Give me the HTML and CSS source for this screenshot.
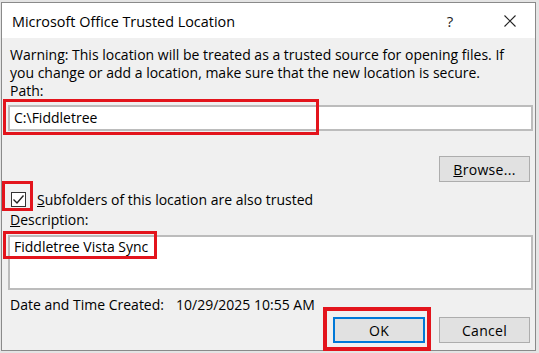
FILE: index.html
```html
<!DOCTYPE html>
<html lang="en">
<head>
  <meta charset="UTF-8" />
  <title>Microsoft Office Trusted Location</title>
  <link rel="stylesheet" href="styles.css">
</head>
<body>
  <div class="dialog">
    <div class="titlebar">
      <span class="title">Microsoft Office Trusted Location</span>
      <span class="help">?</span>
      <span class="close">
        <svg width="12" height="12" viewBox="0 0 12 12"><path d="M0.5 0.5 L11.5 11.5 M11.5 0.5 L0.5 11.5" stroke="#222" stroke-width="1.1" fill="none"/></svg>
      </span>
    </div>

    <div class="content">
      <p class="warning">Warning: This location will be treated as a trusted source for opening files. If you change or add a location, make sure that the new location is secure.</p>

      <div class="label">Path:</div>
      <div class="textbox path">C:\Fiddletree</div>

      <div class="row right browse-row">
        <div class="button"><span><u>B</u>rowse...</span></div>
      </div>

      <div class="row check-row">
        <span class="checkbox">
          <svg width="13" height="13" viewBox="0 0 13 13"><path d="M1.5 6.5 L5 10 L11.5 2.5" stroke="#222" stroke-width="1.4" fill="none"/></svg>
        </span>
        <span><u>S</u>ubfolders of this location are also trusted</span>
      </div>

      <div class="label"><u>D</u>escription:</div>
      <div class="textbox desc">Fiddletree Vista Sync</div>

      <div class="row date-row">
        <span class="date-label">Date and Time Created:</span>
        <span>10/29/2025 10:55 AM</span>
      </div>

      <div class="row right buttons">
        <div class="button default">OK</div>
        <div class="button">Cancel</div>
      </div>
    </div>

    <!-- annotation boxes -->
    <div class="mark mark-path"></div>
    <div class="mark mark-check"></div>
    <div class="mark mark-desc"></div>
    <div class="mark mark-ok"></div>
  </div>
</body>
</html>
```

FILE: styles.css
```css
body { margin: 0; background: #e4e4e4; font-family: "Open Sans", "Noto Sans", sans-serif; font-size: 14px; color: #000; }
.dialog { position: relative; box-sizing: border-box; width: 535px; height: 349px; margin: 2px 0 0 1px; border: 1px solid #8a8a8a; background: #f0f0f0; display: flex; flex-direction: column; }

.titlebar { height: 35px; background: #fff; display: flex; align-items: center; padding-left: 10px; }
.title { flex: 1; font-size: 14.4px; padding-top: 1px; }
.help { width: 20px; text-align: center; font-size: 15px; margin-right: 40px; color: #222; }
.close { width: 20px; display: flex; justify-content: center; margin-right: 15px; }

.content { padding: 8px 5px 0 8px; }
.warning { margin: 0; line-height: 18px; }
.label { line-height: 18px; }

.textbox { box-sizing: border-box; margin: 5px -3px 0 -2px; background: #fff; border: 2px solid #bcbcbc; padding: 2px 4px; }
.path { height: 26px; line-height: 18px; }
.desc { height: 55px; margin-top: 6px; line-height: 18px; padding-top: 1px; }

.row { display: flex; align-items: center; }
.right { justify-content: flex-end; gap: 14px; }
.browse-row { margin-top: 25px; }

.button { box-sizing: border-box; width: 91px; height: 26px; background: #e1e1e1; border: 1px solid #adadad; display: flex; align-items: center; justify-content: center; letter-spacing: 0.3px; }
.button.default { width: 92px; border: 2px solid #0078d7; }

.check-row { margin-top: 6px; height: 22px; }
.checkbox { box-sizing: border-box; width: 15px; height: 15px; margin: 0 11px 0 1px; background: #fff; border: 1px solid #333; display: flex; align-items: center; justify-content: center; }
.check-row + .label { margin-top: 1px; }

.date-row { margin-top: 5px; height: 18px; }
.date-label { width: 166px; }
.buttons { margin-top: 4px; }

.mark { position: absolute; border: 3px solid #e3141c; }
.mark-path { left: 1px; top: 96px; width: 310px; height: 30px; }
.mark-check { left: 0; top: 178px; width: 25px; height: 24px; }
.mark-desc { left: 1px; top: 228px; width: 148px; height: 22px; }
.mark-ok { left: 321px; top: 304px; width: 100px; height: 36px; border-width: 4px; }
```
